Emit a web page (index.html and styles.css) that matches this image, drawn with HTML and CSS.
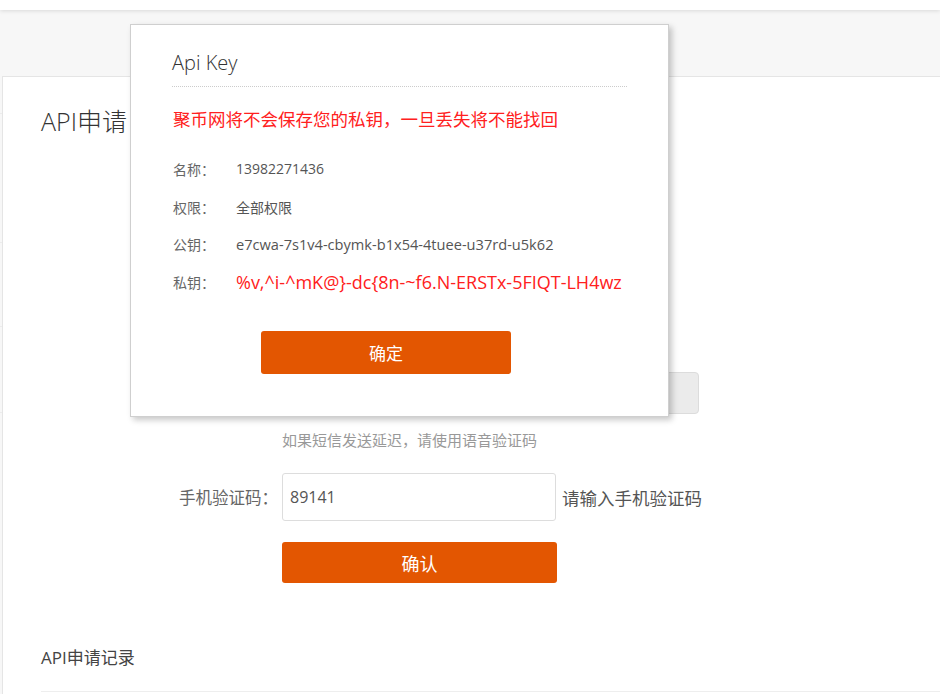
FILE: index.html
```html
<!DOCTYPE html>
<html lang="zh-CN">
<head>
<meta charset="utf-8">
<title>API申请</title>
<link rel="stylesheet" href="styles.css">
</head>
<body>
<div class="topbar"></div>
<div class="page">
  <aside class="sidebar">
    <div class="side-item s1"></div>
    <div class="side-item s2"></div>
    <div class="side-item s3"></div>
    <div class="side-item s4"></div>
  </aside>
  <main class="content">
    <h1 class="page-title">API申请</h1>
    <div class="form">
      <div class="row">
        <input class="field" type="text" value="">
      </div>
      <div class="row">
        <input class="field" type="text" value="">
      </div>
      <div class="row">
        <input class="field" type="text" value="">
      </div>
      <div class="row row-send">
        <input class="field" type="text" value="">
        <button class="send-btn" type="button"></button>
      </div>
      <p class="hint">如果短信发送延迟，请使用语音验证码</p>
      <div class="row row-code">
        <label class="label">手机验证码：</label>
        <input class="field" type="text" value="89141">
        <span class="tip">请输入手机验证码</span>
      </div>
      <div class="row row-submit">
        <button class="primary-btn submit" type="button">确认</button>
      </div>
    </div>
    <h2 class="section-title">API申请记录</h2>
    <div class="records"></div>
  </main>
</div>

<div class="modal">
  <div class="modal-title">Api Key</div>
  <p class="warn">聚币网将不会保存您的私钥，一旦丢失将不能找回</p>
  <dl class="info">
    <div class="info-row"><dt>名称：</dt><dd>13982271436</dd></div>
    <div class="info-row"><dt>权限：</dt><dd>全部权限</dd></div>
    <div class="info-row pub"><dt>公钥：</dt><dd>e7cwa-7s1v4-cbymk-b1x54-4tuee-u37rd-u5k62</dd></div>
    <div class="info-row secret"><dt>私钥：</dt><dd>%v,^i-^mK@}-dc{8n-~f6.N-ERSTx-5FIQT-LH4wz</dd></div>
  </dl>
  <button class="primary-btn ok" type="button">确定</button>
</div>
</body>
</html>
```

FILE: styles.css
```css
* { box-sizing: border-box; }

html, body {
  margin: 0;
  padding: 0;
  height: 100%;
}

body {
  background: #f7f7f7;
  font-family: "Open Sans", "Noto Sans CJK SC", sans-serif;
  color: #555;
  overflow: hidden;
}

.topbar {
  height: 10px;
  background: #fff;
  box-shadow: 0 1px 4px rgba(0, 0, 0, 0.12);
  position: relative;
  z-index: 1;
}

.page {
  margin-top: 66px;
  display: flex;
  height: 618px;
}

.sidebar {
  width: 2px;
  flex: none;
  background: #f7f7f7;
}

.side-item { border-bottom: 1px solid #ececec; }
.s1 { height: 38px; }
.s2 { height: 129px; }
.s3 { height: 84px; }
.s4 { height: 86px; }

.content {
  flex: 1;
  background: #fff;
  border-top: 1px solid #e5e5e5;
  border-left: 1px solid #e5e5e5;
  padding: 28px 0 0 38px;
}

.page-title {
  margin: 0;
  font-size: 25px;
  line-height: 32px;
  font-weight: 300;
  color: #333;
}

.form {
  margin-top: 37px;
  padding-left: 241px;
}

.row {
  display: flex;
  align-items: center;
  height: 48px;
  margin-bottom: 18px;
}

.label {
  width: 241px;
  margin-left: -241px;
  padding-right: 4px;
  text-align: right;
  font-size: 16.5px;
  color: #666;
}

.field {
  width: 274px;
  height: 48px;
  border: 1px solid #ddd;
  border-radius: 3px;
  padding: 0 7px;
  font-family: inherit;
  font-size: 16px;
  color: #555;
  outline: none;
}

.row-send {
  height: 42px;
  margin-bottom: 0;
}

.row-send .field { height: 42px; }

.send-btn {
  margin-left: 6px;
  width: 137px;
  height: 42px;
  background: #ebebeb;
  border: 1px solid #dcdcdc;
  border-radius: 4px;
}

.hint {
  margin: 16px 0 0;
  font-size: 15px;
  line-height: 20px;
  color: #999;
}

.row-code {
  margin-top: 23px;
  margin-bottom: 21px;
}

.tip {
  margin-left: 6px;
  font-size: 17.5px;
  color: #555;
}

.row-submit {
  height: 41px;
  margin-bottom: 0;
}

.primary-btn {
  border: none;
  border-radius: 3px;
  background: #e35601;
  color: #fff;
  font-family: inherit;
  cursor: pointer;
}

.submit {
  width: 275px;
  height: 41px;
  font-size: 18px;
}

.section-title {
  margin: 63px 0 0;
  font-size: 17px;
  line-height: 24px;
  font-weight: 400;
  color: #444;
}

.records {
  margin-top: 21px;
  border-top: 1px solid #eee;
  height: 20px;
}

/* modal overlay */
.modal {
  position: absolute;
  left: 130px;
  top: 24px;
  width: 539px;
  height: 393px;
  background: #fff;
  border: 1px solid #cfcfcf;
  box-shadow: 3px 3px 6px rgba(0, 0, 0, 0.22);
  padding: 26px 41px 0 41px;
  z-index: 5;
}

.modal-title {
  font-size: 20px;
  line-height: 24px;
  font-weight: 300;
  color: #333;
  padding-bottom: 11px;
  border-bottom: 1px dotted #ccc;
}

.warn {
  margin: 20px 0 0 1px;
  font-size: 17.5px;
  line-height: 24px;
  color: #ff2020;
}

.info {
  margin: 19px 0 0 1px;
}

.info-row {
  display: flex;
  align-items: center;
  height: 37.7px;
}

.info-row dt {
  width: 63px;
  font-size: 14px;
  color: #666;
}

.info-row dd {
  margin: 0;
  font-size: 14px;
  color: #555;
}

.pub dd { font-size: 14.6px; }

.secret dd {
  font-size: 18px;
  color: #ff2020;
}

.ok {
  display: block;
  margin: 30px 0 0 89px;
  width: 250px;
  height: 43px;
  font-size: 17px;
}
```
